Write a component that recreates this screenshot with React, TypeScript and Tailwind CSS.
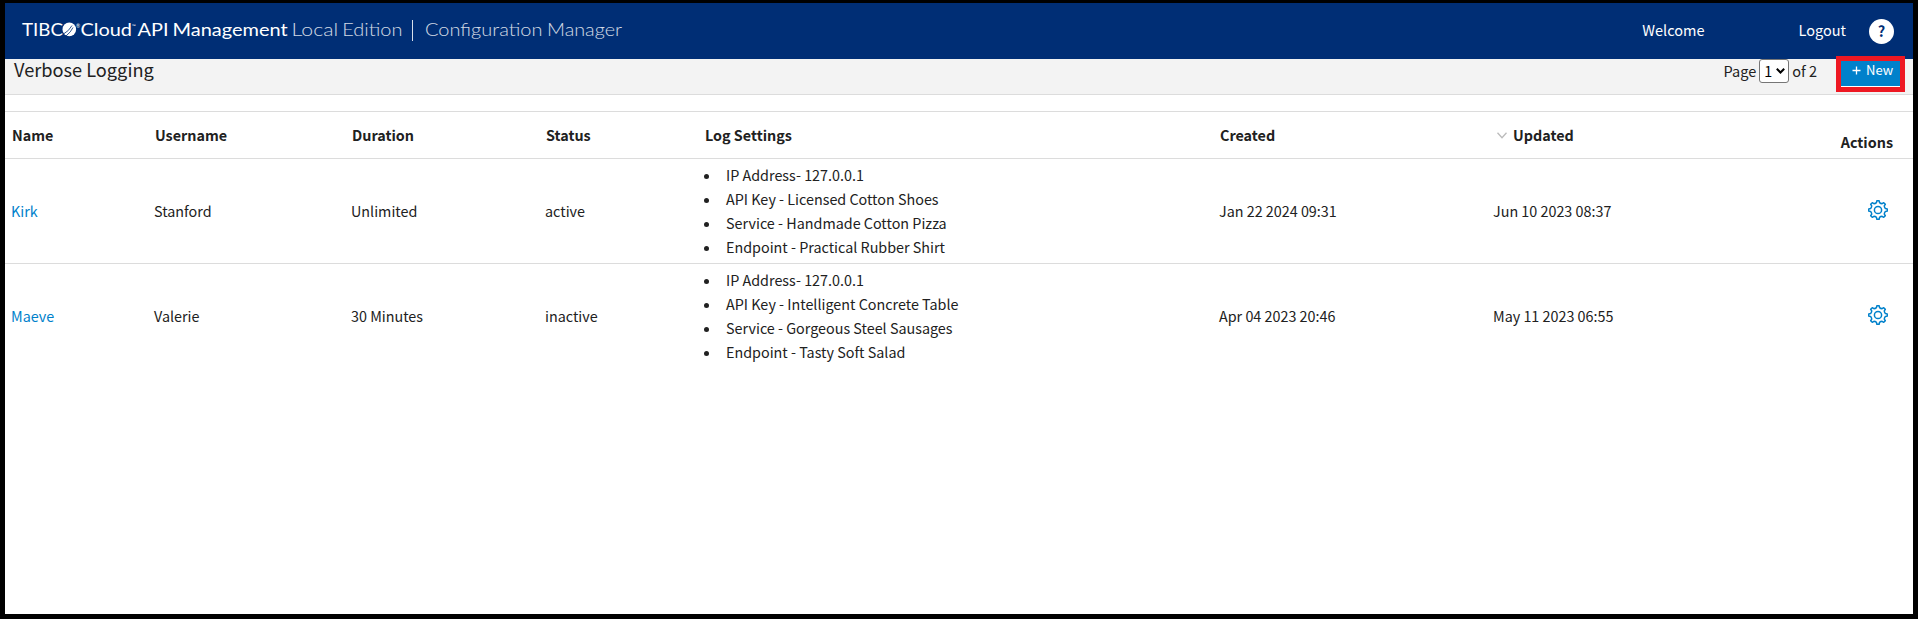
import React from "react";

const rows = [
  {
    name: "Kirk", user: "Stanford", duration: "Unlimited", status: "active",
    logs: ["IP Address- 127.0.0.1", "API Key - Licensed Cotton Shoes", "Service - Handmade Cotton Pizza", "Endpoint - Practical Rubber Shirt"],
    created: "Jan 22 2024 09:31", updated: "Jun 10 2023 08:37",
  },
  {
    name: "Maeve", user: "Valerie", duration: "30 Minutes", status: "inactive",
    logs: ["IP Address- 127.0.0.1", "API Key - Intelligent Concrete Table", "Service - Gorgeous Steel Sausages", "Endpoint - Tasty Soft Salad"],
    created: "Apr 04 2023 20:46", updated: "May 11 2023 06:55",
  },
];

const COLS = "grid grid-cols-[143px_197px_194px_159px_515px_274px_1fr_100px]";

function Brand() {
  const words: [string, number, number, string][] = [
    ["TIBC", 17, 41, "font-normal"],
    ["Cloud", 75.5, 51.5, "font-normal"],
    ["API", 132.5, 31, "font-normal"],
    ["Management", 167.6, 115, "font-normal"],
    ["Local", 286.6, 46.5, "font-light"],
    ["Edition", 337.2, 60.3, "font-light"],
    ["Configuration", 420, 117.5, "font-light"],
    ["Manager", 542, 75, "font-light"],
  ];
  return (
    <svg width="640" height="56" viewBox="0 0 640 56" className="font-['Lato',sans-serif] text-[18px]" fill="#fff">
      {words.map(([w, x, len, cls]) => (
        <text key={w} x={x} y="33" textLength={len} lengthAdjust="spacingAndGlyphs" className={cls} opacity={cls === "font-light" ? 0.82 : 1}>{w}</text>
      ))}
      <circle cx="64.3" cy="26.4" r="6.8" />
      <path d="M58.5 31Q64 28 67 22.5M61 33Q66 29 68 24.5" stroke="#002e75" strokeWidth=".8" fill="none" />
      <text x="71" y="25" className="text-[5px]">®</text>
      <text x="127" y="25" className="text-[5px]">™</text>
      <path d="M407.5 17V38" stroke="#fff" strokeOpacity=".85" />
    </svg>
  );
}

function Gear() {
  const n = 8;
  const pts: string[] = [];
  for (let i = 0; i < n; i++) {
    const a = (i * 360) / n;
    const p = (r: number, d: number) => {
      const t = ((a + d - 90) * Math.PI) / 180;
      return (10 + r * Math.cos(t)).toFixed(2) + " " + (10 + r * Math.sin(t)).toFixed(2);
    };
    pts.push((i === 0 ? "M" : "L") + p(7.5, -12), "L" + p(9.3, -7), "L" + p(9.3, 7), "L" + p(7.5, 12), "Q" + p(6.9, 22.5) + " " + p(7.5, 33));
  }
  return (
    <svg width="20" height="20" viewBox="0 0 20 20" fill="none" stroke="#0081cb" strokeWidth="1.5" strokeLinejoin="round">
      <path d={pts.join("") + "Z"} />
      <circle cx="10" cy="10" r="3.6" />
    </svg>
  );
}

export default function App() {
  return (
    <div className="h-[620px] w-[1918px] bg-white font-['Noto_Sans_CJK_SC',sans-serif] text-[14.35px] leading-6 text-[#212121]">
      <div className="flex h-[619px] flex-col border-[5px] border-t-[3px] border-black bg-white">
        <header className="flex h-14 shrink-0 items-center bg-[#002e75] text-[14.5px] text-white">
          <Brand />
          <span className="ml-auto pb-0.5">Welcome</span>
          <span className="ml-[94px] pb-0.5">Logout</span>
          <span className="ml-[23px] mr-[19px] flex h-[25px] w-[25px] items-center justify-center rounded-full bg-white pb-px font-bold text-[#002e75]">?</span>
        </header>
        <div className="flex h-9 shrink-0 border-b border-[#dcdcdc] bg-[#f3f3f3]">
          <h1 className="pl-[9px] text-[18.2px] leading-[21px]">Verbose Logging</h1>
          <span className="ml-auto text-[14.5px]">Page</span>
          <span className="ml-[3px] flex h-6 w-[30px] items-center rounded-[3px] border border-[#767676] bg-white pl-1 text-black">
            1
            <svg className="ml-1" width="9" height="6" viewBox="0 0 9 6" fill="none" stroke="#000" strokeWidth="2"><path d="M.8 .8L4.5 4.5L8.2 .8" /></svg>
          </span>
          <span className="ml-[3px] text-[14.5px]">of 2</span>
          <div className="relative ml-[19px] mr-2 w-[69px]">
            <div className="absolute -top-[3px] left-0 h-9 w-[69px] border-[5px] border-[#ee1822] bg-white">
              <button className="flex h-[25px] w-full bg-[#0081cb] pl-[11px] text-[13px] leading-[18px] text-white">
                <svg className="mt-[5px]" width="9" height="9" viewBox="0 0 9 9" stroke="#fff" strokeWidth="1.3"><path d="M4.5 .5V8.5M.5 4.5H8.5" /></svg>
                <span className="ml-[5px]">New</span>
              </button>
            </div>
          </div>
        </div>
        <div className={COLS + " mt-4 h-12 shrink-0 items-center border-y border-[#dcdcdc] font-bold"}>
          <span className="pl-[7px]">Name</span>
          <span className="pl-[7px]">Username</span>
          <span className="pl-[7px]">Duration</span>
          <span className="pl-[7px]">Status</span>
          <span className="pl-[7px]">Log Settings</span>
          <span className="pl-[7px]">Created</span>
          <span className="flex items-center pl-2.5">
            <svg className="mr-1.5" width="10" height="7" viewBox="0 0 10 7" fill="none" stroke="#bbb" strokeWidth="1.3"><path d="M.5 .7L5 5.7L9.5 .7" /></svg>
            Updated
          </span>
          <span className="pr-5 pt-3.5 text-right">Actions</span>
        </div>
        {rows.map((r, i) => (
          <div key={r.name} className={COLS + " shrink-0 items-center border-[#dcdcdc] " + (i === 0 ? "h-[105px] border-b" : "h-[104px]")}>
            <a className="pl-1.5 text-[#0081cb]">{r.name}</a>
            <span className="pl-1.5">{r.user}</span>
            <span className="pl-1.5">{r.duration}</span>
            <span className="pl-1.5">{r.status}</span>
            <ul className="pl-1.5">
              {r.logs.map((l) => (
                <li key={l} className="flex items-center">
                  <span className="mr-[17px] mt-0.5 h-[5px] w-[5px] rounded-full bg-[#212121]" />
                  {l}
                </li>
              ))}
            </ul>
            <span className="pl-1.5">{r.created}</span>
            <span className="pl-1.5">{r.updated}</span>
            <span className="flex justify-end pb-0.5 pr-[25px]"><Gear /></span>
          </div>
        ))}
      </div>
    </div>
  );
}
